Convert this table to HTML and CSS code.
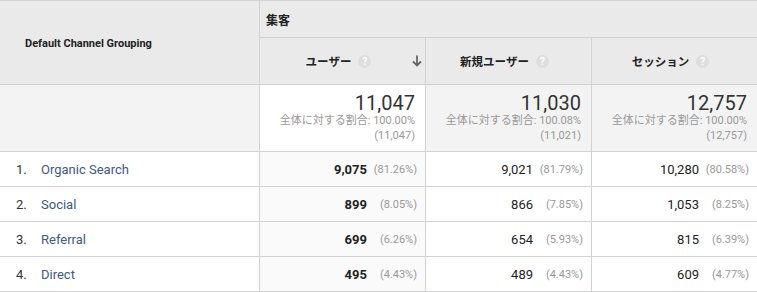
FILE: index.html
```html
<!DOCTYPE html>
<html lang="ja">
<head>
<meta charset="utf-8">
<link rel="stylesheet" href="styles.css">
</head>
<body>
<div class="report">
  <div class="hcell dim">Default Channel Grouping</div>
  <div class="hcell group">集客</div>

  <div class="hcell metric sorted"><span>ユーザー</span><span class="help">?</span>
    <svg class="arrow" width="10" height="12" viewBox="0 0 10 12"><path d="M5 0.5V10.5M1 6.5L5 10.5L9 6.5" fill="none" stroke="#666" stroke-width="1.8"/></svg>
  </div>
  <div class="hcell metric"><span>新規ユーザー</span><span class="help">?</span></div>
  <div class="hcell metric last"><span>セッション</span><span class="help">?</span></div>

  <div class="tcell blank"></div>
  <div class="tcell sorted"><div class="big">11,047</div><div class="sub">全体に対する割合: 100.00%</div><div class="sub">(11,047)</div></div>
  <div class="tcell"><div class="big">11,030</div><div class="sub">全体に対する割合: 100.08%</div><div class="sub">(11,021)</div></div>
  <div class="tcell last"><div class="big">12,757</div><div class="sub">全体に対する割合: 100.00%</div><div class="sub">(12,757)</div></div>

  <div class="dcell name"><span class="idx">1.</span><a class="link">Organic Search</a></div>
  <div class="dcell num sorted"><span class="val bold">9,075</span><span class="pct">(81.26%)</span></div>
  <div class="dcell num"><span class="val">9,021</span><span class="pct">(81.79%)</span></div>
  <div class="dcell num last"><span class="val">10,280</span><span class="pct">(80.58%)</span></div>

  <div class="dcell name"><span class="idx">2.</span><a class="link">Social</a></div>
  <div class="dcell num sorted"><span class="val bold">899</span><span class="pct">(8.05%)</span></div>
  <div class="dcell num"><span class="val">866</span><span class="pct">(7.85%)</span></div>
  <div class="dcell num last"><span class="val">1,053</span><span class="pct">(8.25%)</span></div>

  <div class="dcell name"><span class="idx">3.</span><a class="link">Referral</a></div>
  <div class="dcell num sorted"><span class="val bold">699</span><span class="pct">(6.26%)</span></div>
  <div class="dcell num"><span class="val">654</span><span class="pct">(5.93%)</span></div>
  <div class="dcell num last"><span class="val">815</span><span class="pct">(6.39%)</span></div>

  <div class="dcell name"><span class="idx">4.</span><a class="link">Direct</a></div>
  <div class="dcell num sorted"><span class="val bold">495</span><span class="pct">(4.43%)</span></div>
  <div class="dcell num"><span class="val">489</span><span class="pct">(4.43%)</span></div>
  <div class="dcell num last"><span class="val">609</span><span class="pct">(4.77%)</span></div>
</div>
</body>
</html>
```

FILE: styles.css
```css
html, body {
  margin: 0;
  padding: 0;
  background: #fff;
}
body {
  font-family: Roboto, "Noto Sans CJK JP", sans-serif;
  color: #222;
}
.report {
  width: 757px;
  display: grid;
  grid-template-columns: 260px 166px 166px 165px;
  grid-template-rows: 37px 47px 67px 35px 35px 35px 35px;
  border-top: 1px solid #d2d2d2;
}
.report > div {
  box-sizing: border-box;
  border-right: 1px solid #d2d2d2;
  border-bottom: 1px solid #d2d2d2;
}
.report > .last {
  border-right: none;
}
.hcell {
  background: #eaeaea;
  font-weight: 700;
  font-size: 11px;
  color: #222;
}
.dim {
  grid-row: 1 / span 2;
  display: flex;
  align-items: center;
  padding-left: 25px;
  padding-top: 1px;
}
.group {
  grid-column: 2 / span 3;
  border-right: none !important;
  display: flex;
  align-items: center;
  padding-left: 6px;
  font-size: 12px;
}
.metric {
  display: flex;
  align-items: center;
  justify-content: center;
  gap: 7px;
  padding-right: 8px;
  position: relative;
  font-size: 11.5px;
}
.help {
  width: 13px;
  height: 13px;
  border-radius: 50%;
  background: #dedede;
  color: #fff;
  font-family: Roboto, sans-serif;
  font-size: 10px;
  font-weight: 700;
  line-height: 13px;
  text-align: center;
}
.arrow {
  position: absolute;
  right: 3px;
  top: 17px;
}
.tcell {
  background: #f3f3f3;
  text-align: right;
  padding: 7px 10px 0 0;
  color: #999;
}
.tcell.sorted {
  background: #fff;
}
.big {
  font-size: 20px;
  line-height: 22px;
  color: #333;
}
.sub {
  font-size: 11px;
  line-height: 14.5px;
  color: #999;
}
.dcell {
  display: flex;
  align-items: center;
  font-size: 13px;
}
.dcell.sorted {
  background: #fafafa;
}
.name {
  padding-left: 16px;
}
.idx {
  width: 25px;
  color: #333;
}
.link {
  color: #3b5b80;
  text-decoration: none;
}
.num {
  justify-content: flex-end;
  padding-right: 8px;
}
.val {
  color: #222;
}
.val.bold {
  font-weight: 700;
}
.pct {
  width: 50px;
  text-align: right;
  font-size: 11px;
  color: #999;
}
```
